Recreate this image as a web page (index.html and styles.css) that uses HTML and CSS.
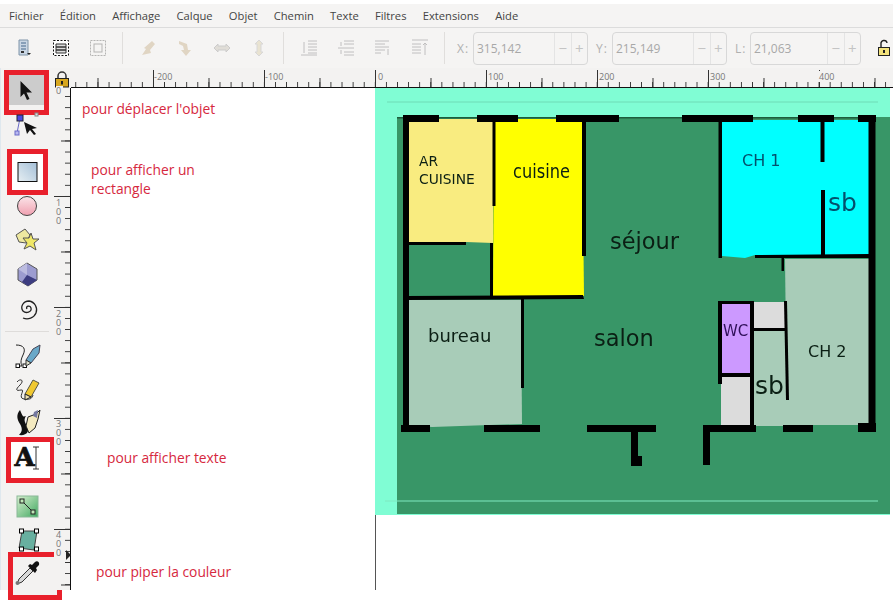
FILE: index.html
```html
<!DOCTYPE html>
<html lang="fr">
<head>
<meta charset="utf-8">
<title>Plan</title>
<link rel="stylesheet" href="styles.css">
</head>
<body>
<div class="menu">
    <span>Fichier</span><span>Édition</span><span>Affichage</span><span>Calque</span><span>Objet</span>
    <span>Chemin</span><span>Texte</span><span>Filtres</span><span>Extensions</span><span>Aide</span>
</div>

<div class="toolbar">
    <div class="slot">
        <svg width="18" height="18" viewBox="0 0 18 18"><path d="M4 1h9v15H4z" fill="#c9d6e4" stroke="#7f94a8"/><path d="M6 4h5M6 7h5M6 10h5" stroke="#47698c"/><path d="M6 13h3" stroke="#333" stroke-width="2"/><path d="M12 14h4l-2 2z" fill="#222"/></svg>
    </div>
    <div class="slot">
        <svg width="18" height="18" viewBox="0 0 18 18"><rect x="1.5" y="1.5" width="15" height="15" fill="#fff" stroke="#111" stroke-dasharray="2 1.5"/><path d="M4 5h10v3H4zM4 8h10v3H4zM4 11h10v3H4z" fill="#ddd" stroke="#333"/></svg>
    </div>
    <div class="slot faded">
        <svg width="18" height="18" viewBox="0 0 18 18"><rect x="1.5" y="1.5" width="15" height="15" fill="none" stroke="#999" stroke-dasharray="2 1"/><rect x="5" y="5" width="8" height="8" fill="none" stroke="#999"/></svg>
    </div>
    <div class="sep"></div>
    <div class="slot faded">
        <svg width="18" height="18" viewBox="0 0 18 18"><path d="M13 2L5 9l2 1-4 6 9-2-1-3 5-6z" fill="#d8c8b0"/></svg>
    </div>
    <div class="slot faded">
        <svg width="18" height="18" viewBox="0 0 18 18"><path d="M3 2l8 3 1 6 3 0-5 6-5-6h3l-1-4-4-2z" fill="#d8c8b0"/></svg>
    </div>
    <div class="slot faded">
        <svg width="18" height="18" viewBox="0 0 18 18"><path d="M1 9l4-4v2h8V5l4 4-4 4v-2H5v2z" fill="#d8d4cc" stroke="#bbb"/></svg>
    </div>
    <div class="slot faded">
        <svg width="18" height="18" viewBox="0 0 18 18"><path d="M9 1l4 4h-2v8h2l-4 4-4-4h2V5H5z" fill="#e4dcc4" stroke="#ccc"/></svg>
    </div>
    <div class="sep"></div>
    <div class="slot faded">
        <svg width="18" height="18" viewBox="0 0 18 18"><path d="M1 16h16M8 2h9M8 5h9M8 8h9M8 11h9M8 14h9M4 3v11" stroke="#aaa" fill="none"/></svg>
    </div>
    <div class="slot faded">
        <svg width="18" height="18" viewBox="0 0 18 18"><path d="M7 2h10M7 5h10M1 9h16M7 13h10M7 16h10M4 3v4M4 11v4" stroke="#aaa" fill="none"/></svg>
    </div>
    <div class="slot faded">
        <svg width="18" height="18" viewBox="0 0 18 18"><path d="M1 2h14M1 5h10M1 8h14M1 11h10M1 14h6M14 10v6" stroke="#aaa" fill="none"/></svg>
    </div>
    <div class="slot faded">
        <svg width="18" height="18" viewBox="0 0 18 18"><path d="M1 1h16M1 5h9M1 8h9M1 11h9M1 14h9M14 16V4M12 6l2-2 2 2" stroke="#aaa" fill="none"/></svg>
    </div>
    <div class="sep"></div>
    <span class="coord coord-x">X:</span>
    <div class="spin"><span class="spin-value">315,142</span><span class="spin-btn">−</span><span class="spin-btn">+</span></div>
    <span class="coord coord-y">Y:</span>
    <div class="spin"><span class="spin-value">215,149</span><span class="spin-btn">−</span><span class="spin-btn">+</span></div>
    <span class="coord coord-l">L:</span>
    <div class="spin spin-short"><span class="spin-value">21,063</span><span class="spin-btn">−</span><span class="spin-btn">+</span></div>
    <svg class="unlock" width="14" height="18" viewBox="0 0 14 18"><path d="M4 9V5a3 3 0 0 1 6-1" fill="none" stroke="#222" stroke-width="1.4"/><rect x="1.5" y="8.500" width="11" height="8" fill="#f3e27c" stroke="#222"/><rect x="6" y="11" width="2" height="3" fill="#222"/></svg>
</div>

<div class="workspace">
    <div class="toolbox">
        <div class="tool tool-first mark mark-select">
            <svg width="34" height="34" viewBox="0 0 34 34"><path d="M10.500 8v16l3.500-3.500 3 6.500 2.500-1-3-6.500h5.500z" fill="#111"/></svg>
        </div>
        <div class="tool">
            <svg width="34" height="34" viewBox="0 0 34 34"><path d="M10 11L7 26" stroke="#6a6ac8"/><rect x="7" y="8" width="6" height="6" fill="#4a4ae0" stroke="#223"/><rect x="5" y="24" width="4" height="4" fill="#b8b8f0" stroke="#6a6ac8"/><rect x="25" y="6" width="3" height="3" fill="#ddd" stroke="#888"/><path d="M14 15l13 6-5 1 4 5-2 1-4-5-3 4z" fill="#111"/></svg>
        </div>
        <div class="tool tool-gap mark mark-rect">
            <svg width="34" height="34" viewBox="0 0 34 34"><defs><linearGradient id="rectfill" x1="0" y1="1" x2="1" y2="0"><stop offset="0" stop-color="#e6eef2"/><stop offset="1" stop-color="#a4c0d8"/></linearGradient></defs><rect x="8" y="7.500" width="19" height="19" fill="url(#rectfill)" stroke="#111"/></svg>
        </div>
        <div class="tool">
            <svg width="34" height="34" viewBox="0 0 34 34"><defs><linearGradient id="ballfill" x1="0" y1="1" x2="0" y2="0"><stop offset="0" stop-color="#f0a0b0"/><stop offset="1" stop-color="#fbe4e8"/></linearGradient></defs><circle cx="17" cy="17" r="9.500" fill="url(#ballfill)" stroke="#444"/></svg>
        </div>
        <div class="tool">
            <svg width="34" height="34" viewBox="0 0 34 34"><path d="M6 12l9-6 5 6-4 8-7-1z" fill="#eee8a0" stroke="#555"/><path d="M21 10l2 6 6 0-5 4 2 7-6-4-6 3 3-6-4-5 6 0z" fill="#f0e868" stroke="#555"/></svg>
        </div>
        <div class="tool">
            <svg width="34" height="34" viewBox="0 0 34 34"><path d="M17 6l10 6v11l-9 6-10-6V12z" fill="#9c9cd0" stroke="#555"/><path d="M17 18l10 5-9 6-6-4z" fill="#3c3c80"/><path d="M8 12l9 6v-12z" fill="#bcbce0"/></svg>
        </div>
        <div class="tool">
            <svg width="34" height="34" viewBox="0 0 34 34"><path d="M17 18c-2-3 3-4 4-1 1 4-5 6-8 3-3-4 0-10 6-10 6 1 9 7 7 12-2 5-8 7-13 5" fill="none" stroke="#222" stroke-width="1.300"/></svg>
        </div>
        <div class="tool-sep"></div>
        <div class="tool">
            <svg width="34" height="34" viewBox="0 0 34 34"><path d="M6 7c8 0 10 4 7 10s-2 9-1 11" fill="none" stroke="#222"/><path d="M12 28h-4" stroke="#222"/><rect x="6" y="26" width="3.500" height="3.500" fill="#fff" stroke="#111"/><rect x="13" y="26" width="3.500" height="3.500" fill="#fff" stroke="#111"/><path d="M16 22l7-11 7-4-1 8-8 10z" fill="#6aa8c8" stroke="#445"/><path d="M16 22l5 3-5 3z" fill="#dcdcc8" stroke="#333"/></svg>
        </div>
        <div class="tool">
            <svg width="34" height="34" viewBox="0 0 34 34"><path d="M7 10c3-4 8-2 3 3s-4 6 1 5-4 8 3 9 8-1 9-4" fill="none" stroke="#333"/><path d="M15 22l8-14 6 3-8 14z" fill="#f0c830" stroke="#554"/><path d="M15 22l6 3-6 3z" fill="#eee0b0" stroke="#222"/></svg>
        </div>
        <div class="tool">
            <svg width="34" height="34" viewBox="0 0 34 34"><path d="M10 4c-4 5-3 9 0 14s2 8-1 11c8 1 11-4 8-9s-3-7-1-10c-3 1-3 1-6-6z" fill="#111"/><path d="M18 11l8-3 4-4-2 9-3 9-6 5-3-7z" fill="#f4eac0" stroke="#222"/><path d="M24 6l4-2-1 8-4-2z" fill="#7478a0"/></svg>
        </div>
        <div class="tool mark mark-text">
            <span class="tool-letter">A</span>
            <svg class="ibeam" width="8" height="24" viewBox="0 0 8 24"><path d="M1 1h6M4 1v22M1 23h6" fill="none" stroke="#333"/></svg>
        </div>
        <div class="tool tool-gap-wide">
            <svg width="34" height="34" viewBox="0 0 34 34"><defs><linearGradient id="gradfill" x1="0" y1="0" x2="1" y2="1"><stop offset="0" stop-color="#d8f0d0"/><stop offset="1" stop-color="#40a860"/></linearGradient></defs><rect x="7" y="7" width="21" height="21" fill="url(#gradfill)" stroke="#8ab898"/><path d="M12 12l11 11" stroke="#222"/><rect x="10" y="10" width="4" height="4" fill="#bfe8b8" stroke="#222"/><rect x="21" y="21" width="4" height="4" fill="#bfe8b8" stroke="#222"/></svg>
        </div>
        <div class="tool tool-short">
            <svg width="34" height="34" viewBox="0 0 34 34"><path d="M12 8h15l-3 19-15-2z" fill="#68b0a0" stroke="#444"/><rect x="9.500" y="6" width="4" height="4" fill="#fff" stroke="#000"/><rect x="24.500" y="6" width="4" height="4" fill="#fff" stroke="#000"/><rect x="9.500" y="24" width="4" height="4" fill="#fff" stroke="#000"/><rect x="24.500" y="24" width="4" height="4" fill="#fff" stroke="#000"/></svg>
        </div>
        <div class="tool mark mark-pipette">
            <svg width="34" height="34" viewBox="0 0 34 34"><path d="M20 13L9 24l-2 5 5-2 11-11z" fill="#d8d8d8" stroke="#333"/><path d="M18 11l7 7 2-3-1-2 3-3c1-3-2-5-4-3l-3 3-2-1z" fill="#111"/><circle cx="7.500" cy="28" r="2" fill="#777"/></svg>
        </div>
    </div>

    <div class="ruler-corner">
        <svg width="16" height="17" viewBox="0 0 16 17"><path d="M4 8V5a4 4 0 0 1 8 0v3" fill="none" stroke="#333" stroke-width="1.500"/><rect x="1.500" y="7.500" width="13" height="8.500" fill="#d8a820" stroke="#222"/><rect x="7" y="10" width="2" height="3.500" fill="#222"/></svg>
    </div>
    <div class="ruler-h">
        <span class="tick-label label-a">-200</span>
        <span class="tick-label label-b">-100</span>
        <span class="tick-label label-c">0</span>
        <span class="tick-label label-d">100</span>
        <span class="tick-label label-e">200</span>
        <span class="tick-label label-f">300</span>
        <span class="tick-label label-g">400</span>
    </div>
    <div class="ruler-v">
        <span class="vtick-label vlabel-a">0</span>
        <span class="vtick-label vlabel-b">100</span>
        <span class="vtick-label vlabel-c">200</span>
        <span class="vtick-label vlabel-d">300</span>
        <span class="vtick-label vlabel-e">400</span>
        <span class="ruler-pointer"></span>
    </div>

    <div class="canvas">
        <svg class="plan" width="522" height="502" viewBox="375 88 522 502">
            <rect class="page-edge" x="375" y="88" width="1" height="502"/>
            <rect class="aqua" x="375" y="88" width="515" height="427"/>
            <rect class="green" x="397" y="117" width="493" height="397"/>
            <path class="guide-top" d="M387 102H878"/>
            <path class="guide-bottom" d="M385 501H878"/>

            <path class="sand" d="M409 119H493V243L466 242 409 243z"/>
            <path class="lemon" d="M494 119H582L584 296 493 297z"/>
            <path class="sage" d="M409 300H521L522 424 432 427 409 425z"/>
            <path class="sky" d="M721 120H869V255H755L745 258 722 256z"/>
            <path class="sage" d="M785 259H869V425H787z"/>
            <path class="sage" d="M754 331H788V426H754z"/>
            <rect class="violet" x="722" y="303" width="29" height="71"/>
            <rect class="silver" x="721" y="377" width="30" height="49"/>
            <rect class="silver" x="754" y="302" width="31" height="27"/>

            <rect class="thin" x="397" y="117" width="476" height="1.500"/>
            <rect x="403" y="115" width="36" height="7"/>
            <rect x="477" y="115" width="41" height="7"/>
            <rect x="556" y="115" width="63" height="7"/>
            <rect x="682" y="115" width="71" height="7"/>
            <rect x="798" y="115" width="36" height="7"/>
            <rect x="858" y="115" width="18" height="7"/>
            <rect x="403" y="115" width="6" height="317"/>
            <rect x="868.500" y="115" width="7" height="315"/>

            <rect x="492.500" y="120" width="3" height="86"/>
            <rect x="582" y="120" width="4" height="136"/>
            <rect x="405" y="242" width="61" height="3"/>
            <rect x="490" y="243" width="3" height="54"/>
            <path d="M405 296l178-1 1 4-179 1z"/>
            <rect x="521" y="298" width="3" height="90"/>

            <rect x="718.500" y="120" width="3.500" height="138"/>
            <rect x="820.500" y="120" width="4" height="42"/>
            <rect x="821" y="190" width="4" height="66"/>
            <path d="M755 255l114-1v4H755z"/>
            <rect x="781.500" y="258" width="2.500" height="13"/>

            <rect x="718" y="301" width="36" height="3"/>
            <rect x="718" y="301" width="4" height="83"/>
            <rect x="750" y="301" width="4" height="125"/>
            <rect x="720" y="373" width="32" height="4"/>
            <rect x="752" y="328" width="34" height="3"/>
            <path d="M784 301h3l2 99h-3z"/>

            <rect x="401" y="425" width="29" height="7"/>
            <rect x="484" y="425" width="56" height="7"/>
            <rect x="587" y="425" width="69" height="7"/>
            <rect x="703" y="425" width="53" height="7"/>
            <rect x="783" y="425" width="30" height="7"/>
            <rect x="858" y="423" width="18" height="9"/>
            <rect x="631" y="430" width="7" height="36"/>
            <rect x="631" y="456" width="11" height="10"/>
            <rect x="703" y="430" width="7" height="35"/>

            <text class="room room-s" x="419" y="166">AR</text>
            <text class="room room-s" x="419" y="184">CUISINE</text>
            <text class="room room-cuisine" x="513" y="178" textLength="57" lengthAdjust="spacingAndGlyphs">cuisine</text>
            <text class="room room-l" x="610" y="249">séjour</text>
            <text class="room room-l" x="594" y="346">salon</text>
            <text class="room room-m" x="428" y="342">bureau</text>
            <text class="room room-c room-blue" x="742" y="166">CH 1</text>
            <text class="room room-xl room-blue" x="828" y="211">sb</text>
            <text class="room room-w" x="723" y="336">WC</text>
            <text class="room room-xl" x="755" y="394">sb</text>
            <text class="room room-c" x="808" y="357">CH 2</text>
        </svg>

        <p class="note note-move">pour déplacer l'objet</p>
        <p class="note note-rect">pour afficher un<br>rectangle</p>
        <p class="note note-text">pour afficher texte</p>
        <p class="note note-color">pour piper la couleur</p>
    </div>
</div>
</body>
</html>
```

FILE: styles.css
```css
* {
    box-sizing: border-box;
}

body {
    margin: 0;
    height: 609px;
    overflow: hidden;
    background: #fff;
    font-family: "Open Sans", "Noto Sans", sans-serif;
}

.menu {
    height: 28px;
    padding: 5px 0 0 9px;
    display: flex;
    gap: 16.200px;
    font-size: 11.200px;
    line-height: 22px;
    color: #444;
    background: linear-gradient(#fff 4px, #f5f4f3 4px);
    border-bottom: 1px solid #dcdcdc;
}

.toolbar {
    height: 40px;
    padding-left: 5px;
    display: flex;
    align-items: center;
    background: #f5f4f3;
}

.slot {
    width: 37px;
    display: flex;
    justify-content: center;
}

.faded {
    opacity: 0.7;
}

.sep {
    width: 1px;
    height: 32px;
    margin: 0 6px;
    background: #e0dedc;
}

.coord {
    font-size: 12px;
    color: #b0b0b0;
    letter-spacing: 1px;
}

.coord-x {
    margin: 0 1px 0 4px;
    width: 17px;
    padding-left: 2px;
}

.coord-y {
    margin: 0 1px 0 8px;
    width: 15px;
}

.coord-l {
    margin: 0 1px 0 8px;
    width: 14px;
}

.spin {
    width: 115px;
    height: 33px;
    display: flex;
    align-items: stretch;
    border: 1px solid #d8d8d8;
    border-radius: 4px;
    font-size: 12px;
    line-height: 31px;
    color: #a8a8a8;
}

.spin-short {
    width: 111px;
}

.spin-value {
    flex: 1;
    padding-left: 3px;
}

.spin-btn {
    width: 16.500px;
    text-align: center;
    font-size: 15px;
    color: #c4c4c4;
    border-left: 1px solid #e4e4e4;
}

.unlock {
    margin-left: 16px;
}

.workspace {
    display: grid;
    grid-template-columns: 54px 17px 1fr;
    grid-template-rows: 20px 502px;
}

.toolbox {
    grid-row: 1 / 3;
    padding-right: 2px;
    border-left: 1px solid #dfe8ee;
    background: #f3f2f1;
    display: flex;
    flex-direction: column;
    align-items: center;
}

.tool {
    position: relative;
    height: 34px;
    width: 34px;
    flex: none;
}

.tool svg {
    position: relative;
    z-index: 1;
    display: block;
}

.tool-first {
    margin-top: 5px;
}

.tool-gap {
    margin-top: 14px;
}

.tool-gap-wide {
    margin-top: 15px;
}

.tool-short {
    height: 32px;
}

.tool-sep {
    flex: none;
    width: 44px;
    height: 1px;
    margin: 6px 0 6px;
    background: #dedcda;
}

.tool-letter {
    position: relative;
    z-index: 1;
    display: block;
    padding-left: 5px;
    font-family: "DejaVu Serif", serif;
    font-weight: 700;
    font-size: 26px;
    line-height: 34px;
    color: #111;
    -webkit-text-stroke: 0.700px #111;
}

.tool .ibeam {
    position: absolute;
    left: 22px;
    top: 6px;
}

/* red frames painted on the screenshot */
.mark::after {
    content: "";
    position: absolute;
    border: 5px solid #e8202c;
    background: #fff;
}

.mark-select::after {
    left: -6px;
    right: -5px;
    top: -3px;
    bottom: -8px;
    background: linear-gradient(#ccc 30px, #f3f2f1 30px);
}

.mark-rect::after {
    left: -3px;
    right: -4px;
    top: -6px;
    bottom: -6px;
}

.mark-text::after {
    left: -4px;
    right: -11px;
    top: -3px;
    bottom: -9px;
}

.mark-pipette::after {
    left: -2px;
    right: -18px;
    top: -3px;
    bottom: -11px;
    background: #f3f2f1;
}

.ruler-corner {
    grid-column: 2;
    grid-row: 1;
    background: #f3f2f1;
    padding-top: 3px;
}

.ruler-h {
    grid-column: 3;
    grid-row: 1;
    position: relative;
    background-color: #f3f2f1;
    border-bottom: 1px solid #111;
    background-image:
        linear-gradient(90deg, #333 1px, transparent 1px),
        linear-gradient(90deg, #333 1px, transparent 1px),
        linear-gradient(90deg, #333 1px, transparent 1px);
    background-repeat: repeat-x;
    background-size: 111px 17px, 55.500px 9px, 11.100px 5px;
    background-position: 82px 100%, 26.500px 100%, 4.300px 100%;
}

.tick-label {
    position: absolute;
    top: 3px;
    font-size: 9px;
    line-height: 11px;
    color: #777;
    background: #f3f2f1;
}

.label-a { left: 83px; }
.label-b { left: 194px; }
.label-c { left: 307px; }
.label-d { left: 417px; }
.label-e { left: 528px; }
.label-f { left: 639px; }
.label-g { left: 748px; }

.ruler-v {
    grid-column: 2;
    grid-row: 2;
    position: relative;
    background-color: #f3f2f1;
    border-right: 1px solid #111;
    background-image:
        linear-gradient(#333 1px, transparent 1px),
        linear-gradient(#333 1px, transparent 1px),
        linear-gradient(#333 1px, transparent 1px);
    background-repeat: repeat-y;
    background-size: 16px 111px, 9px 55.500px, 5px 11.100px;
    background-position: 100% 108px, 100% 52.500px, 100% 8.100px;
}

.vtick-label {
    position: absolute;
    left: 2px;
    width: 7px;
    font-size: 9px;
    line-height: 9px;
    color: #777;
    word-break: break-all;
    background: #f3f2f1;
}

.vlabel-a { top: -2px; }
.vlabel-b { top: 110px; }
.vlabel-c { top: 221px; }
.vlabel-d { top: 331px; }
.vlabel-e { top: 442px; }

.ruler-pointer {
    position: absolute;
    left: 12px;
    top: 462px;
    border-left: 5px solid #222;
    border-top: 5px solid transparent;
    border-bottom: 5px solid transparent;
}

.canvas {
    grid-column: 3;
    grid-row: 2;
    position: relative;
    background: #fff;
}

.plan {
    position: absolute;
    left: 304px;
    top: 0;
    filter: blur(0.300px);
}

.page-edge { fill: #555; }
.aqua { fill: #80fdd4; }
.green { fill: #389667; }
.sand { fill: #f9ec80; }
.lemon { fill: #ffff00; }
.sage { fill: #a8ccb8; }
.sky { fill: #00ffff; }
.violet { fill: #cc99ff; }
.silver { fill: #dcdcdc; }
.thin { fill: #1d5c3c; }

.guide-top {
    stroke: #6fdcb6;
    fill: none;
}

.guide-bottom {
    stroke: #7fe8c0;
    fill: none;
}

.room {
    font-family: "DejaVu Sans", sans-serif;
    fill: #0b1f14;
}

.room-blue { fill: #04506c; }
.room-s { font-size: 13.800px; }
.room-cuisine { font-size: 19px; }
.room-m { font-size: 18px; }
.room-l { font-size: 22.500px; }
.room-c { font-size: 16px; }
.room-w { font-size: 15px; fill: #30105a; }
.room-xl { font-size: 25px; }

.note {
    position: absolute;
    margin: 0;
    font-size: 13.800px;
    line-height: 19px;
    color: #d6283e;
}

.note-move { left: 11px; top: 11px; }
.note-rect { left: 20px; top: 72px; }
.note-text { left: 36px; top: 360px; }
.note-color { left: 25px; top: 474px; }
```
